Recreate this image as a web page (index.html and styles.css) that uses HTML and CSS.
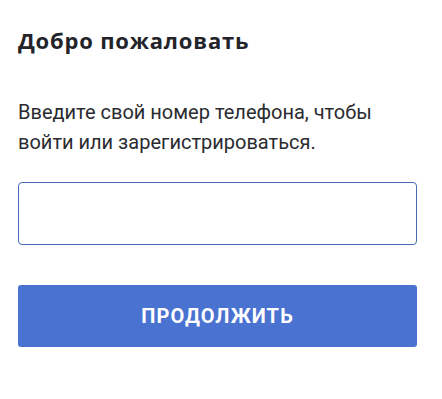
FILE: index.html
```html
<!DOCTYPE html>
<html lang="ru">
<head>
<meta charset="utf-8">
<link rel="stylesheet" href="styles.css">
</head>
<body>
<main class="page">
  <h1 class="title">Добро пожаловать</h1>
  <p class="lead">Введите свой номер телефона, чтобы войти или зарегистрироваться.</p>
  <input class="phone" type="tel" aria-label="Телефон">
  <button class="submit" type="button">ПРОДОЛЖИТЬ</button>
</main>
</body>
</html>
```
FILE: styles.css
```css
html, body {
  margin: 0;
  padding: 0;
  background: #ffffff;
}
.page {
  width: 399px;
  margin-left: 18px;
  padding-top: 26px;
  display: flex;
  flex-direction: column;
  font-family: Roboto, "Liberation Sans", sans-serif;
}
.title {
  margin: 0;
  font-family: "Open Sans", "Liberation Sans", sans-serif;
  font-weight: 700;
  font-size: 22px;
  line-height: 28px;
  letter-spacing: 0.8px;
  color: #23242a;
}
.lead {
  margin: 43px 0 0;
  font-size: 20px;
  line-height: 30px;
  color: #2a2b30;
}
.phone {
  margin-top: 25px;
  box-sizing: border-box;
  height: 63px;
  width: 100%;
  border: 1px solid #4a6ab5;
  border-radius: 4px;
  background: #fff;
  outline: none;
}
.submit {
  margin-top: 40px;
  height: 62px;
  width: 100%;
  border: none;
  border-radius: 3px;
  background: #4a72d1;
  color: #ffffff;
  font-family: Roboto, "Liberation Sans", sans-serif;
  font-weight: 700;
  font-size: 20px;
  letter-spacing: 1.1px;
}
```
